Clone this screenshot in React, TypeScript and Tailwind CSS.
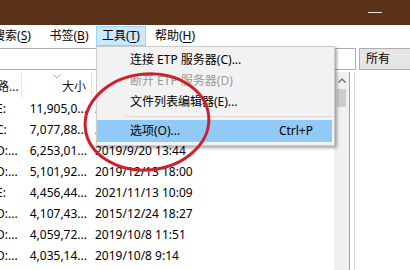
import React from 'react'

interface Row {
  path: string
  size: string
  date: string
}

const rows: Row[] = [
  { path: 'E:', size: '11,905,0...', date: '2019/9/20 13:40' },
  { path: 'C:', size: '7,077,88...', date: '2021/11/13 10:12' },
  { path: 'D:...', size: '6,253,01...', date: '2019/9/20 13:44' },
  { path: 'D:...', size: '5,101,92...', date: '2019/12/13 18:00' },
  { path: 'E:', size: '4,456,44...', date: '2021/11/13 10:09' },
  { path: 'D:...', size: '4,107,43...', date: '2015/12/24 18:27' },
  { path: 'D:...', size: '4,059,72...', date: '2019/10/8 11:51' },
  { path: 'D:...', size: '4,035,14...', date: '2019/10/8 9:14' },
  { path: 'D:...', size: '3,998,20...', date: '2019/10/8 9:10' },
]

// menu bar entry, access key underlined
function MenuBarItem({ label, hotkey, active, className }: { label: string; hotkey: string; active?: boolean; className?: string }) {
  return (
    <div
      className={`mt-[1px] h-[20px] w-[50px] shrink-0 flex items-center justify-center whitespace-nowrap border ${
        active ? 'bg-[#cce8ff] border-[#99d1ff]' : 'border-transparent'
      } ${className ?? ''}`}
    >
      {label}(<span className="underline underline-offset-2">{hotkey}</span>)
    </div>
  )
}

function ToolsMenu() {
  return (
    <div className="absolute left-[96px] top-[46px] w-[239px] bg-[#f2f2f2] border border-[#cccccc] shadow-[2px_2px_3px_rgba(0,0,0,0.35)] pt-[2px] pb-[3px]">
      <div className="h-[21px] flex items-center pl-[33px] whitespace-nowrap">连接 ETP 服务器(C)...</div>
      <div className="h-[21px] flex items-center pl-[33px] whitespace-nowrap text-[#9a9a9a]">断开 ETP 服务器(D)</div>
      <div className="h-[21px] flex items-center pl-[33px] whitespace-nowrap">文件列表编辑器(E)...</div>
      <div className="h-[8px] flex items-center pl-[28px] pr-[2px]">
        <div className="h-px w-full bg-[#d7d7d7]" />
      </div>
      <div className="h-[22px] mr-[2px] flex items-center justify-between pl-[33px] pr-[19px] bg-[#91c9f7] whitespace-nowrap">
        <span>选项(O)...</span>
        <span>Ctrl+P</span>
      </div>
    </div>
  )
}

export default function App() {
  return (
    <div className="relative w-[410px] h-[270px] overflow-hidden bg-white text-[12px] leading-none text-black font-['Noto_Sans','Noto_Sans_CJK_SC',sans-serif]">
      {/* title bar */}
      <div className="h-[25px] bg-[#5a321a] flex items-center justify-end pr-[28px]">
        <div className="w-[14px] h-px bg-[#eadfd8]" />
      </div>

      {/* menu bar */}
      <div className="h-[21px] flex items-start">
        <MenuBarItem label="搜索" hotkey="S" className="ml-[-13px]" />
        <MenuBarItem label="书签" hotkey="B" className="ml-[7px]" />
        <MenuBarItem label="工具" hotkey="T" active className="ml-[2px]" />
        <MenuBarItem label="帮助" hotkey="H" className="ml-[4px]" />
      </div>

      {/* search row */}
      <div className="h-[26px] flex pt-[2px]">
        <div className="ml-[-2px] w-[358px] h-[22px] border border-[#abadb3] bg-white" />
        <div className="ml-[3px] mr-[-4px] flex-1 h-[22px] border border-[#adadad] bg-[#e5e5e5] pl-[6px] flex items-center">
          所有
        </div>
      </div>

      {/* body */}
      <div className="h-[198px] flex">
        {/* result list */}
        <div className="w-[334px] flex flex-col overflow-hidden">
          <div className="h-[26px] shrink-0 flex text-[#1a1a1a]">
            <div className="w-[22px] overflow-hidden whitespace-nowrap border-r border-[#e5e5e5] flex items-center pt-[3px]">
              <span className="ml-[-3px]">路...</span>
            </div>
            <div className="relative w-[70px] border-r border-[#e5e5e5] flex items-center justify-end pr-[5px] pt-[3px]">
              <svg className="absolute left-[31px] top-[2px]" width="8" height="5" viewBox="0 0 8 5">
                <path d="M0.5 0.5 L4 4 L7.5 0.5" fill="none" stroke="#a8a8a8" strokeWidth="1" />
              </svg>
              大小
            </div>
            <div className="flex-1 flex items-center pl-[4px] pt-[3px]">修改时间</div>
          </div>
          {rows.map((r, i) => (
            <div key={i} className="h-[21px] shrink-0 flex whitespace-nowrap">
              <div className="w-[22px] overflow-hidden flex items-center">
                <span className="ml-[-4px]">{r.path}</span>
              </div>
              <div className="w-[70px] flex items-center justify-end pr-[5px]">{r.size}</div>
              <div className="flex-1 flex items-center pl-[3px]">{r.date}</div>
            </div>
          ))}
        </div>

        {/* scrollbar */}
        <div className="w-[15px] bg-[#f0f0f0] flex flex-col">
          <div className="h-[17px] flex items-center justify-center">
            <svg width="8" height="5" viewBox="0 0 8 5">
              <path d="M0.5 4.5 L4 1 L7.5 4.5" fill="none" stroke="#606060" strokeWidth="1.2" />
            </svg>
          </div>
          <div className="h-[18px] mx-[3px] bg-[#cdcdcd]" />
        </div>

        {/* splitter */}
        <div className="w-px bg-[#9f9f9f]" />
        <div className="w-[4px] bg-white" />
        <div className="w-px bg-[#dadada]" />

        {/* right pane */}
        <div className="flex-1 bg-white" />
      </div>

      <ToolsMenu />

      {/* hand-drawn annotation */}
      <svg className="absolute inset-0 pointer-events-none" width="410" height="270" viewBox="0 0 410 270">
        <ellipse
          cx="147"
          cy="122"
          rx="62"
          ry="48"
          transform="rotate(-6 147 122)"
          fill="none"
          stroke="#cf1f2c"
          strokeWidth="3"
        />
      </svg>
    </div>
  )
}
